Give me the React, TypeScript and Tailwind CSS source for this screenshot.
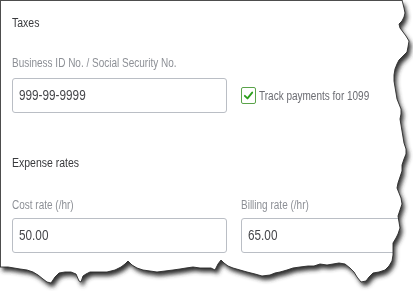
const TEAR =
  "402,0 403,4 404,8 405,13 404,17 402,21 399,24 400,28 403,32 406,36 409,41 408,47 407,52 403,56 399,60 397,64 395,69 394,75 394,81 395,87 396,93 397,99 399,104 401,109 401,114 400,119 401,125 402,131 403,137 404,143 406,149 406,154 404,159 402,165 402,171 400,177 398,183 397,188 399,193 401,198 402,204 400,210 398,216 399,222 400,228 398,234 396,238 393,243 393,249 393,255 392,261 389,266 385,270 379,272 373,273 369,277 366,281 361,282 357,277 354,272 350,268 345,264 339,263 333,264 327,265 320,264 314,266 308,266 300,267 293,268 287,270 280,272 275,273 270,275 262,276 255,274 247,272 240,270 233,268 228,266 224,263 221,260 218,264 215,270 211,268 207,268 200,268 193,267 186,268 180,269 173,270 165,271 157,272 150,271 143,270 137,268 132,265 128,261 125,264 121,267 115,270 107,272 98,272 90,272 86,274 83,276 81,282 79,281 76,274 71,272 65,272 59,273 55,277 51,283 47,282 43,279 38,275 33,272 27,270 20,269 14,268 8,267 0,267";

const PAPER = `0,0 ${TEAR} 0,0`;

function TornEdge() {
  return (
    <svg
      className="absolute inset-0 pointer-events-none"
      width="413"
      height="291"
      viewBox="0 0 413 291"
    >
      <defs>
        <mask id="outside">
          <rect width="413" height="291" fill="white" />
          <polygon points={PAPER} fill="black" />
        </mask>
        <filter id="blur" x="-10%" y="-10%" width="120%" height="120%">
          <feGaussianBlur stdDeviation="2.2" />
        </filter>
      </defs>
      <g mask="url(#outside)">
        <rect width="413" height="291" fill="white" />
        <polygon
          points={PAPER}
          transform="translate(2.5 4)"
          fill="#333"
          filter="url(#blur)"
        />
      </g>
      <polyline
        points={TEAR}
        fill="none"
        stroke="#2b2b2b"
        strokeWidth="0.9"
        strokeLinejoin="round"
      />
    </svg>
  );
}

// the screenshot's font is narrow, squeeze Arial metrics to fit
function Txt({ children, narrow }: { children: React.ReactNode; narrow?: boolean }) {
  return (
    <span
      className={
        narrow
          ? "inline-block origin-left scale-x-[0.8] whitespace-nowrap"
          : "inline-block origin-left scale-x-[0.84] whitespace-nowrap"
      }
    >
      {children}
    </span>
  );
}

function Field({ value }: { value: string }) {
  return (
    <div className="w-[215px] h-[35px] shrink-0 rounded-[3px] border border-[#babec5] bg-white flex items-center pl-[6px] text-[14px] text-[#46474b]">
      <Txt>{value}</Txt>
    </div>
  );
}

export default function App() {
  return (
    <div
      className="relative w-[413px] h-[291px] overflow-hidden bg-white"
      style={{ fontFamily: '"Liberation Sans", Arial, sans-serif' }}
    >
      <div className="h-full border-l border-t border-[#4d4d4d] pl-[11px] pt-[15px]">
        <div className="text-[12.5px] leading-[14px] text-[#393a3d]">
          <Txt>Taxes</Txt>
        </div>

        <div className="mt-[26px] text-[12.5px] leading-[14px] text-[#8d9096]">
          <Txt narrow>Business ID No. / Social Security No.</Txt>
        </div>
        <div className="mt-[8px] flex items-center">
          <Field value="999-99-9999" />
          <div className="ml-[14px] flex items-center">
            <span className="w-[15px] h-[17px] rounded-[2px] border border-[#5aa34a] flex items-center justify-center">
              <svg width="11" height="11" viewBox="0 0 12 12">
                <path
                  d="M2 6.3 L4.9 9.2 L10 2.8"
                  fill="none"
                  stroke="#2ca01c"
                  strokeWidth="2"
                  strokeLinecap="round"
                  strokeLinejoin="round"
                />
              </svg>
            </span>
            <span className="ml-[3px] text-[12.5px] leading-[14px] text-[#6b6c72]">
              <Txt narrow>Track payments for 1099</Txt>
            </span>
          </div>
        </div>

        <div className="mt-[43px] text-[12.5px] leading-[14px] text-[#393a3d]">
          <Txt>Expense rates</Txt>
        </div>

        <div className="mt-[28px] flex gap-[14px]">
          <div className="flex flex-col">
            <div className="text-[12.5px] leading-[14px] text-[#8d9096]">
              <Txt narrow>Cost rate (/hr)</Txt>
            </div>
            <div className="mt-[6px]">
              <Field value="50.00" />
            </div>
          </div>
          <div className="flex flex-col">
            <div className="text-[12.5px] leading-[14px] text-[#8d9096]">
              <Txt narrow>Billing rate (/hr)</Txt>
            </div>
            <div className="mt-[6px]">
              <Field value="65.00" />
            </div>
          </div>
        </div>
      </div>
      <TornEdge />
    </div>
  );
}
